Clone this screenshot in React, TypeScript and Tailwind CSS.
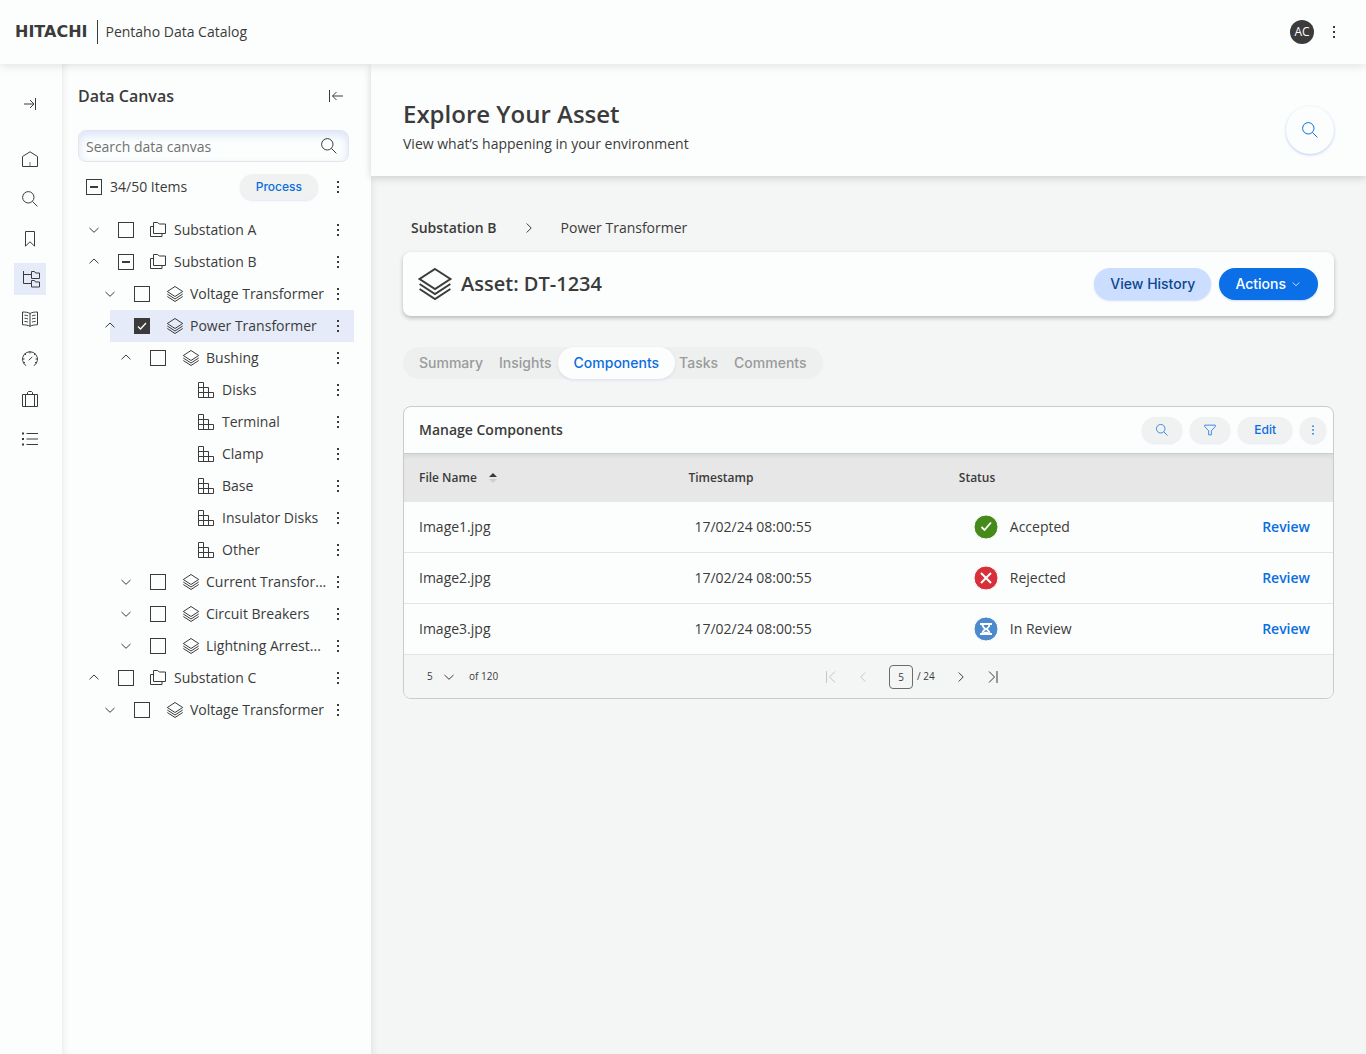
import { useState } from 'react'
import type { ReactNode } from 'react'
import clsx from 'clsx'

/* ---------- Icons ---------- */

type IconProps = { className?: string }

function Icon({ className = 'size-4', children }: { className?: string; children: ReactNode }) {
  return (
    <svg viewBox="0 0 16 16" fill="none" stroke="currentColor" aria-hidden="true" className={clsx('shrink-0 overflow-visible', className)}>
      {children}
    </svg>
  )
}

const SearchIcon = ({ className }: IconProps) => (
  <Icon className={className}><circle cx="6.3" cy="6.3" r="5.7" /><path d="M10.4 10.4l5 5" /></Icon>
)
const HomeIcon = () => (
  <Icon><path d="M.5 5.500L8 .8l7.500 4.700v10H.5z" /><path d="M8 11v4.500" opacity=".7" /></Icon>
)
const BookmarkIcon = () => (
  <Icon><path d="M3.500 .5h9v14.600L8 10.800l-4.500 4.300z" /></Icon>
)
const TreeIcon = () => (
  <Icon className="size-4 translate-x-px">
    <path d="M.5 0v12.500h8M.5 3.500h8" />
    <path d="M8.500 .5h3l1 1.500h4v5.500h-8zM8.500 9.500h3l1 1.500h4v5h-8z" />
  </Icon>
)
const BookIcon = () => (
  <Icon>
    <path d="M8 2.500C6 1.200 3 1 .5 1v12.800c2.500 0 5.500.3 7.500 1.500 2-1.200 5-1.500 7.500-1.500V1C13 1 10 1.200 8 2.500zM8 2.500v12.800" />
    <path d="M2.500 4.200c1.300 0 2.500.2 3.500.7M2.500 7.300c1.300 0 2.500.2 3.500.7M2.500 10.400c1.300 0 2.500.2 3.500.7M13.500 4.200c-1.300 0-2.500.2-3.500.7M13.500 7.300c-1.300 0-2.500.2-3.500.7M13.500 10.400c-1.300 0-2.500.2-3.500.7" />
  </Icon>
)
const GaugeIcon = () => (
  <Icon>
    <path d="M4.200 14.700A7.500 7.500 0 1111.800 14.700" />
    <path d="M6.800 9.300L10.300 5.800M8 .5v2M2.700 2.700l1.400 1.400M13.300 2.700l-1.400 1.400M.5 8h2M13.500 8h2M1.500 12l1.500-.8M14.500 12l-1.500-.8" />
  </Icon>
)
const CaseIcon = () => (
  <Icon><path d="M.5 3.500h15v12H.5zM3.500 3.500v12M12.500 3.500v12M5.500 3.500v-2l1-1h3l1 1v2" /></Icon>
)
const ListIcon = () => (
  <Icon><path d="M0 2.500h2M0 8h2M0 13.500h2" strokeWidth="2" /><path d="M4.500 2.500H16M4.500 8H16M4.500 13.500H16" /></Icon>
)
const ArrowToRight = () => (
  <Icon><path d="M2 8h10M8 4l4 4-4 4M13.500 2v12" /></Icon>
)
const ArrowToLeft = () => (
  <Icon><path d="M15 8H4.500M8.500 4l-4 4 4 4M1.500 2v12" /></Icon>
)
const ChevronDown = ({ className }: IconProps) => (
  <Icon className={className}><path d="M3.500 6L8 10.300 12.500 6" /></Icon>
)
const ChevronUp = ({ className }: IconProps) => (
  <Icon className={className}><path d="M3.500 9.300L8 5l4.500 4.300" /></Icon>
)
const ChevronRight = ({ className }: IconProps) => (
  <Icon className={className}><path d="M5.700 3.500L10.200 8l-4.500 4.500" /></Icon>
)
const ChevronLeft = ({ className }: IconProps) => (
  <Icon className={className}><path d="M10.200 3.500L5.700 8l4.500 4.500" /></Icon>
)
const FoldersIcon = () => (
  <Icon><path d="M3.500 .5h4.200l1.500 1.500h6.300v9.500h-12zM3.500 4.500h-3v10h11.500v-3" /></Icon>
)
const LayersIcon = ({ className }: IconProps) => (
  <Icon className={className}>
    <path d="M8 .5l7.700 5L8 10.500.3 5.500zM.3 8L8 13l7.700-5M.3 10.500l7.700 5 7.700-5" />
  </Icon>
)
const BlocksIcon = () => (
  <Icon><path d="M.5 .5h5v15h-5zM.5 5.500h10v10M.5 10.500h15v5H.5" /></Icon>
)
const FilterIcon = ({ className }: IconProps) => (
  <Icon className={className}><path d="M1 1.500h14v2L9.800 9v5.500H6.200V9L1 3.500z" /></Icon>
)
const KebabIcon = ({ className }: IconProps) => (
  <Icon className={className}><path d="M7 3h2M7 8h2M7 13h2" strokeWidth="2" /></Icon>
)

/* ---------- Data ---------- */

const railItems = [
  { label: 'Home', icon: HomeIcon },
  { label: 'Search', icon: SearchIcon },
  { label: 'Bookmarks', icon: BookmarkIcon },
  { label: 'Data Canvas', icon: TreeIcon, active: true },
  { label: 'Glossary', icon: BookIcon },
  { label: 'Dashboard', icon: GaugeIcon },
  { label: 'Workspace', icon: CaseIcon },
  { label: 'Lists', icon: ListIcon },
]

type Check = 'off' | 'on' | 'mixed'

type TreeRow = {
  id: number
  label: string
  level: 0 | 1 | 2 | 3
  open?: boolean
  check?: Check
  selected?: boolean
}

const treeRows: TreeRow[] = [
  { id: 1,  label: 'Substation A',        level: 0 },
  { id: 2,  label: 'Substation B',        level: 0, open: true, check: 'mixed' },
  { id: 3,  label: 'Voltage Transformer', level: 1 },
  { id: 4,  label: 'Power Transformer',   level: 1, open: true, check: 'on', selected: true },
  { id: 5,  label: 'Bushing',             level: 2, open: true },
  { id: 6,  label: 'Disks',               level: 3 },
  { id: 7,  label: 'Terminal',            level: 3 },
  { id: 8,  label: 'Clamp',               level: 3 },
  { id: 9,  label: 'Base',                level: 3 },
  { id: 10, label: 'Insulator Disks',     level: 3 },
  { id: 11, label: 'Other',               level: 3 },
  { id: 12, label: 'Current Transfor...', level: 2 },
  { id: 13, label: 'Circuit Breakers',    level: 2 },
  { id: 14, label: 'Lightning Arrest...', level: 2 },
  { id: 15, label: 'Substation C',        level: 0, open: true },
  { id: 16, label: 'Voltage Transformer', level: 1 },
]

const indent = ['pl-0', 'pl-4', 'pl-8', 'pl-8']

const tabs = ['Summary', 'Insights', 'Components', 'Tasks', 'Comments']

type Status = 'Accepted' | 'Rejected' | 'In Review'

const files: { name: string; time: string; status: Status }[] = [
  { name: 'Image1.jpg', time: '17/02/24 08:00:55', status: 'Accepted' },
  { name: 'Image2.jpg', time: '17/02/24 08:00:55', status: 'Rejected' },
  { name: 'Image3.jpg', time: '17/02/24 08:00:55', status: 'In Review' },
]

/* ---------- Parts ---------- */

function Checkbox({ id, label, state = 'off' }: { id: string; label: string; state?: Check }) {
  const [value, setValue] = useState<Check>(state)
  return (
    <span className="relative size-4 shrink-0">
      <input
        id={id}
        type="checkbox"
        aria-label={label}
        checked={value === 'on'}
        onChange={() => setValue(value === 'on' ? 'off' : 'on')}
        className="block size-4 appearance-none border border-[#3b3b3b] checked:bg-[#3b3b3b]"
      />
      {value !== 'off' && (
        <svg
          viewBox="0 0 16 16"
          fill="none"
          aria-hidden="true"
          className={clsx('absolute inset-0 size-4 pointer-events-none', value === 'on' ? 'stroke-white' : 'stroke-[#3b3b3b]')}
        >
          {value === 'on' ? <path d="M4 8.500l2.500 2.500L12 5" strokeWidth="1.300" /> : <path d="M4 8h8" strokeWidth="2" />}
        </svg>
      )}
    </span>
  )
}

function KebabButton({ label, className }: { label: string; className?: string }) {
  return (
    <button type="button" aria-label={label} className={clsx('shrink-0', className)}>
      <KebabIcon />
    </button>
  )
}

function StatusIcon({ status }: { status: Status }) {
  const fill = { Accepted: '#478a1c', Rejected: '#d6313a', 'In Review': '#4b8acb' }[status]
  return (
    <svg viewBox="0 0 24 24" fill="none" stroke="#fff" aria-hidden="true" className="size-6 shrink-0">
      <circle cx="12" cy="12" r="12" fill={fill} />
      {status === 'Accepted' && <path d="M7.500 12l3 3L17 7.500" strokeWidth="1.800" />}
      {status === 'Rejected' && <path d="M7 7l10 10M17 7L7 17" strokeWidth="2" />}
      {status === 'In Review' && (
        <>
          <path d="M6 7h12M6 17h12" strokeWidth="2" />
          <path d="M8.500 7.500c0 2.500 1.500 3.500 3 4.500-1.500 1-3 2-3 4.500M15.500 7.500c0 2.500-1.500 3.500-3 4.500 1.500 1 3 2 3 4.500" strokeWidth="1.800" />
          <path d="M10 15.500h4" strokeWidth="1.500" />
        </>
      )}
    </svg>
  )
}

function TopBar() {
  return (
    <header className="relative z-20 h-16 shrink-0 flex items-center pl-[15px] pr-6 bg-[#fcfefd] shadow-[0_1px_10px_rgba(0,0,0,0.13)]">
      <span className="font-['DejaVu_Sans',sans-serif] text-base leading-6 font-bold">HITACHI</span>
      <span className="h-6 w-px bg-[#3b3b3b] ml-[10px] mr-[7px]" />
      <span className="text-sm">Pentaho Data Catalog</span>
      <div className="ml-auto flex items-center gap-3">
        <button type="button" aria-label="Account" className="size-6 rounded-full bg-[#3b3b3b] text-white text-xs">
          AC
        </button>
        <KebabButton label="More" />
      </div>
    </header>
  )
}

function Rail() {
  return (
    <nav className="w-[62px] shrink-0 pl-[14px] pt-6 bg-[#fcfefd]">
      <button type="button" aria-label="Expand menu" className="size-8 mb-[23px] flex items-center justify-center">
        <ArrowToRight />
      </button>
      <ul className="flex flex-col gap-2">
        {railItems.map(item => {
          const RailIcon = item.icon
          return (
            <li key={item.label}>
              <a
                href="#"
                aria-label={item.label}
                className={clsx('size-8 flex items-center justify-center', item.active && 'bg-[#e6ebf9]')}
              >
                <RailIcon />
              </a>
            </li>
          )
        })}
      </ul>
    </nav>
  )
}

function TreeItem({ row }: { row: TreeRow }) {
  const leaf = row.level === 3
  const Chevron = row.open ? ChevronUp : ChevronDown
  return (
    <li className={clsx('flex items-center h-8', indent[row.level])}>
      <span className="relative z-10 size-4 -mr-2 shrink-0">
        {!leaf && (
          <button type="button" aria-label={`Toggle ${row.label}`} className="block">
            <Chevron />
          </button>
        )}
      </span>
      <div className={clsx('flex-1 min-w-0 h-8 flex items-center pr-2', leaf ? 'pl-[72px]' : 'pl-6', row.selected && 'bg-[#e6ebf9]')}>
        {!leaf && (
          <span className="mr-4 flex">
            <Checkbox id={`node-${row.id}`} label={row.label} state={row.check} />
          </span>
        )}
        {leaf ? <BlocksIcon /> : row.level === 0 ? <FoldersIcon /> : <LayersIcon className="size-4 translate-x-px" />}
        <span className="flex-1 min-w-0 ml-2 text-sm whitespace-nowrap">{row.label}</span>
        <KebabButton label={`${row.label} options`} />
      </div>
    </li>
  )
}

function CanvasPanel() {
  return (
    <aside className="w-[309px] shrink-0 pl-4 pr-[17px] pt-5 bg-[#fcfefd] shadow-[inset_5px_0_6px_-3px_rgba(0,0,0,0.07)]">
      <div className="h-6 flex items-center justify-between pr-[10px]">
        <h2 className="text-base font-semibold">Data Canvas</h2>
        <button type="button" aria-label="Collapse panel">
          <ArrowToLeft />
        </button>
      </div>

      <div className="relative mt-[22px] mr-[5px]">
        <input
          type="text"
          aria-label="Search data canvas"
          placeholder="Search data canvas"
          className="block w-full h-8 pl-[7px] pr-9 text-sm rounded-lg border border-[#e3e5ea] placeholder:text-[#6f7272] shadow-[inset_0_4px_10px_#dbe3f8]"
        />
        <SearchIcon className="absolute right-3 top-2 size-4" />
      </div>

      <div className="mt-[11px] ml-2 pr-2 h-7 flex items-center">
        <Checkbox id="all-items" label="Select all items" state="mixed" />
        <label htmlFor="all-items" className="ml-2 text-sm">34/50 Items</label>
        <button
          type="button"
          className="ml-auto mr-3 h-[26px] px-4 rounded-full bg-[#f0f1f1] font-['Inter',sans-serif] text-xs font-medium text-[#0b6ddf] shadow-[0_1px_2px_#dfe6fa]"
        >
          Process
        </button>
        <KebabButton label="Canvas options" />
      </div>

      <ul className="mt-[13px] ml-2">
        {treeRows.map(row => <TreeItem key={row.id} row={row} />)}
      </ul>
    </aside>
  )
}

function Tabs() {
  const [active, setActive] = useState('Components')
  return (
    <div role="tablist" className="w-fit mt-[31px] px-2 h-8 flex rounded-full bg-[#eeefef] font-['Inter',sans-serif] text-sm font-medium">
      {tabs.map(tab => (
        <button
          key={tab}
          type="button"
          role="tab"
          aria-selected={tab === active}
          onClick={() => setActive(tab)}
          className={clsx(
            'h-8',
            tab === active
              ? 'px-4 -ml-0.5 -mr-1 rounded-full bg-[#fcfefd] text-[#0b6ddf] shadow-[0_1px_3px_#d5dcee]'
              : 'px-2 text-[#999b9b]',
          )}
        >
          {tab}
        </button>
      ))}
    </div>
  )
}

const toolButton = 'h-[26px] flex items-center justify-center rounded-full bg-[#f0f1f1] text-[#0b6ddf] shadow-[0_1px_2px_#dfe6fa]'

function ComponentsTable() {
  return (
    <section className="mt-[27px] rounded-lg border border-[#c9cccc] bg-[#fcfefd] overflow-hidden">
      <div className="h-[47px] pl-[15px] pr-[7px] flex items-center border-b border-[#c9cccc]">
        <h3 className="text-sm font-semibold">Manage Components</h3>
        <div className="ml-auto flex gap-2">
          <button type="button" aria-label="Search components" className={clsx(toolButton, 'w-10')}>
            <SearchIcon className="size-3" />
          </button>
          <button type="button" aria-label="Filter components" className={clsx(toolButton, 'w-10')}>
            <FilterIcon className="size-3" />
          </button>
          <button type="button" className={clsx(toolButton, "px-4 font-['Inter',sans-serif] text-xs font-medium")}>
            Edit
          </button>
          <button type="button" aria-label="Table options" className={clsx(toolButton, 'w-[26px]')}>
            <KebabIcon className="size-3" />
          </button>
        </div>
      </div>

      <table className="w-full table-fixed border-separate border-spacing-0 text-left text-sm">
        <thead className="bg-[#e7e7e7] shadow-[inset_0_4px_5px_-2px_rgba(0,0,0,0.07)]">
          <tr className="h-12 text-xs">
            <th className="w-[29%] pl-[15px] font-semibold">
              <button type="button" className="flex items-center gap-3">
                File Name
                <svg viewBox="0 0 8 10" aria-hidden="true" className="w-2 h-[10px]">
                  <path d="M0 4l4-4 4 4z" fill="#3b3b3b" />
                  <path d="M0 6l4 4 4-4z" fill="#cfcfcf" />
                </svg>
              </button>
            </th>
            <th className="w-[29%] pl-[15px] font-semibold">Timestamp</th>
            <th className="w-[29%] pl-4 font-semibold">Status</th>
            <th aria-label="Actions" />
          </tr>
        </thead>
        <tbody>
          {files.map(file => (
            <tr key={file.name} className="h-[51px] [&>td]:border-b [&>td]:border-[#e3e5e5]">
              <td className="pl-[15px]">{file.name}</td>
              <td className="pl-[21px]">{file.time}</td>
              <td className="pl-[31px]">
                <span className="flex items-center gap-3">
                  <StatusIcon status={file.status} />
                  {file.status}
                </span>
              </td>
              <td className="pr-[23px] text-right">
                <a href="#" className="font-semibold text-[#0b6ddf]">Review</a>
              </td>
            </tr>
          ))}
        </tbody>
      </table>

      {/* Pagination */}
      <div className="h-[43px] flex items-center bg-[#f4f5f5] text-[10px]">
        <div className="w-[45%] pl-[23px] flex items-center">
          <span className="relative w-[30px]">
            <select aria-label="Rows per page" className="block w-full h-4 appearance-none">
              <option>5</option>
              <option>10</option>
              <option>20</option>
            </select>
            <ChevronDown className="absolute right-0 top-0 size-4 pointer-events-none" />
          </span>
          <span className="ml-3">of 120</span>
        </div>
        <div className="ml-px flex items-center">
          <button type="button" aria-label="First page" disabled className="text-[#c4c6c6]">
            <Icon><path d="M3.500 2v12M12 2.500L6.500 8l5.500 5.500" /></Icon>
          </button>
          <button type="button" aria-label="Previous page" disabled className="ml-4 text-[#c4c6c6]">
            <ChevronLeft />
          </button>
          <input
            type="text"
            aria-label="Page"
            defaultValue="5"
            className="ml-[18px] size-6 rounded-sm border border-[#6b6d6d] text-center"
          />
          <span className="ml-1">/ 24</span>
          <button type="button" aria-label="Next page" className="ml-[18px]">
            <ChevronRight />
          </button>
          <button type="button" aria-label="Last page" className="ml-4">
            <Icon><path d="M4 2.500L9.500 8 4 13.500M12 2v12" /></Icon>
          </button>
        </div>
      </div>
    </section>
  )
}

export default function App() {
  return (
    <div className="min-h-screen flex flex-col bg-[#f4f5f5] font-['Open_Sans',sans-serif] text-[#3b3b3b]">
      <TopBar />
      <div className="flex-1 flex">
        <Rail />
        <CanvasPanel />
        <main className="flex-1 min-w-0 shadow-[inset_5px_0_6px_-3px_rgba(0,0,0,0.07)]">
          <div className="h-28 pl-8 pr-8 flex items-center justify-between bg-[#fcfefd] shadow-[0_2px_8px_rgba(0,0,0,0.16)]">
            <div className="mt-3">
              <h1 className="text-2xl leading-8 font-semibold">Explore Your Asset</h1>
              <p className="mt-1 text-sm">View what’s happening in your environment</p>
            </div>
            <button
              type="button"
              aria-label="Search assets"
              className="mt-5 size-12 flex items-center justify-center rounded-full bg-[#fcfefd] text-[#0b6ddf] shadow-[0_1px_3px_#b9cbf7]"
            >
              <SearchIcon />
            </button>
          </div>

          <div className="px-8 pt-10">
            <nav aria-label="Breadcrumb" className="pl-2 h-6 flex items-center text-sm">
              <a href="#" className="font-semibold">Substation B</a>
              <ChevronRight className="size-4 mx-6" />
              <span>Power Transformer</span>
            </nav>

            <section className="mt-3 h-16 px-4 flex items-center rounded-lg bg-[#fcfefd] shadow-[0_2px_4px_rgba(0,0,0,0.25)]">
              <LayersIcon className="size-8" />
              <h2 className="ml-[10px] text-xl font-semibold">Asset: DT-1234</h2>
              <div className="ml-auto flex gap-2 font-['Inter',sans-serif] text-sm font-medium">
                <button type="button" className="h-8 px-4 rounded-full bg-[#ccdeff] text-[#0b478f] shadow-[0_1px_2px_#cfdcf8]">
                  View History
                </button>
                <button type="button" className="h-8 px-4 flex items-center gap-1 rounded-full bg-[#0b6fe8] text-white shadow-[0_1px_2px_#cfdcf8]">
                  Actions
                  <ChevronDown className="size-3" />
                </button>
              </div>
            </section>

            <Tabs />
            <ComponentsTable />
          </div>
        </main>
      </div>
    </div>
  )
}
